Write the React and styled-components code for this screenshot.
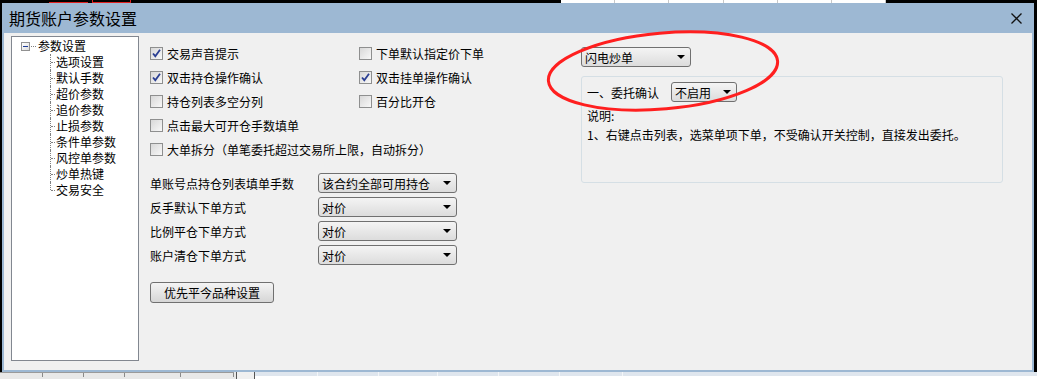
import React from "react";
import styled, { createGlobalStyle } from "styled-components";

const GlobalStyle = createGlobalStyle`
  body {
    margin: 0;
    background: #000;
    font-family: "Noto Sans CJK SC", "Noto Sans", sans-serif;
  }
`;

const checks = [
  { label: "交易声音提示", checked: true },
  { label: "下单默认指定价下单", checked: false },
  { label: "双击持仓操作确认", checked: true },
  { label: "双击挂单操作确认", checked: true },
  { label: "持仓列表多空分列", checked: false },
  { label: "百分比开仓", checked: false },
  { label: "点击最大可开仓手数填单", checked: false, wide: true },
  { label: "大单拆分（单笔委托超过交易所上限，自动拆分）", checked: false, wide: true },
];

const selects = [
  { label: "单账号点持仓列表填单手数", value: "该合约全部可用持仓" },
  { label: "反手默认下单方式", value: "对价" },
  { label: "比例平仓下单方式", value: "对价" },
  { label: "账户清仓下单方式", value: "对价" },
];

const treeItems = ["选项设置", "默认手数", "超价参数", "追价参数", "止损参数", "条件单参数", "风控单参数", "炒单热键", "交易安全"];

const Check = ({ checked }) => (
  <Box>
    {checked && (
      <svg width="11" height="11" viewBox="0 0 11 11">
        <path d="M2 5.5 L4.3 8.2 L9 1.8" fill="none" stroke="#2b3f93" strokeWidth="1.8" />
      </svg>
    )}
  </Box>
);

const App = () => {
  return (
    <Screen>
      <GlobalStyle />
      <TopStrip>
        <RedMark $w={39} />
        <RedBox />
        <Spacer $w={430} />
        <TableStrip>
          {[0, 1, 2, 3, 4, 5].map((i) => (
            <TableCell key={i} />
          ))}
        </TableStrip>
      </TopStrip>
      <Dialog>
        <TitleBar>
          <Title>期货账户参数设置</Title>
          <Close>
            <svg width="11" height="11" viewBox="0 0 11 11">
              <path d="M0.5 0.5 L10.5 10.5 M10.5 0.5 L0.5 10.5" stroke="#111" strokeWidth="1.3" />
            </svg>
          </Close>
        </TitleBar>
        <Body>
          <TreeBox>
            <TreeRoot>
              <Expander />
              <RootDots />
              参数设置
            </TreeRoot>
            <TreeChildren>
              {treeItems.map((t, i) => (
                <TreeItem key={t} $last={i === treeItems.length - 1}>
                  {t}
                </TreeItem>
              ))}
            </TreeChildren>
          </TreeBox>
          <Middle>
            <CheckGrid>
              {checks.map((c) => (
                <CheckRow key={c.label} $wide={c.wide}>
                  <Check checked={c.checked} />
                  {c.label}
                </CheckRow>
              ))}
            </CheckGrid>
            <SelectGrid>
              {selects.map((s) => (
                <React.Fragment key={s.label}>
                  <Label>{s.label}</Label>
                  <Select $w={139}>
                    <span>{s.value}</span>
                    <Arrow />
                  </Select>
                </React.Fragment>
              ))}
            </SelectGrid>
            <Button>优先平今品种设置</Button>
          </Middle>
          <Right>
            <Select $w={110}>
              <span>闪电炒单</span>
              <Arrow />
            </Select>
            <Group>
              <GroupRow>
                <span>一、委托确认</span>
                <Select $w={66}>
                  <span>不启用</span>
                  <Arrow />
                </Select>
              </GroupRow>
              <Note>说明:</Note>
              <Note>1、右键点击列表，选菜单项下单，不受确认开关控制，直接发出委托。</Note>
            </Group>
          </Right>
        </Body>
      </Dialog>
      <BottomStrip>
        <GridCells>
          {[40, 40, 40, 55, 52].map((w, i) => (
            <GridCell key={i} $w={w} />
          ))}
        </GridCells>
        <Gap />
        <BlueCells>
          {[62, 60, 58, 60, 60, 62].map((w, i) => (
            <BlueCell key={i} $w={w} />
          ))}
        </BlueCells>
      </BottomStrip>
      <Ellipse width="240" height="90" viewBox="0 0 240 90">
        <ellipse
          cx="120"
          cy="45"
          rx="115"
          ry="38"
          fill="none"
          stroke="#ff1f1f"
          strokeWidth="3"
          transform="rotate(-5 120 45)"
        />
      </Ellipse>
    </Screen>
  );
};

export default App;

const Screen = styled.div`
  position: relative;
  width: 1037px;
  height: 379px;
  overflow: hidden;
  background: #000;
  font-size: 12px;
  color: #000;
`;

const TopStrip = styled.div`
  display: flex;
  height: 3px;
  padding-left: 49px;
`;

const RedMark = styled.div`
  width: ${(p) => p.$w}px;
  height: 3px;
  border-bottom: 1px solid #e02020;
  box-sizing: border-box;
`;

const RedBox = styled.div`
  width: 39px;
  height: 3px;
  margin-left: 4px;
  border: 1px solid #e02020;
  border-top: none;
  box-sizing: border-box;
`;

const Spacer = styled.div`
  width: ${(p) => p.$w}px;
`;

const TableStrip = styled.div`
  display: flex;
  width: 325px;
  background: #fff;
`;

const TableCell = styled.div`
  flex: 1;
  border-right: 1px solid #c8c8c8;
`;

const Dialog = styled.div`
  width: 1032px;
  height: 369px;
  margin-left: 2px;
  box-sizing: border-box;
  border: 2px solid #9db8d3;
  border-top: none;
  background: #f0f0f0;
  display: flex;
  flex-direction: column;
`;

const TitleBar = styled.div`
  height: 30px;
  margin: 0 -2px;
  background: #9db8d3;
  display: flex;
  align-items: center;
  justify-content: space-between;
  padding: 0 12px 0 7px;
`;

const Title = styled.div`
  font-size: 16px;
  line-height: 20px;
  color: #000;
`;

const Close = styled.div`
  display: flex;
  align-items: center;
`;

const Body = styled.div`
  flex: 1;
  display: flex;
  align-items: flex-start;
`;

const TreeBox = styled.div`
  width: 128px;
  height: 325px;
  margin: 3px 0 0 7px;
  box-sizing: border-box;
  border: 1px solid #828790;
  background: #fff;
  padding: 1px 0 0 9px;
`;

const TreeRoot = styled.div`
  display: flex;
  align-items: center;
  height: 16px;
  line-height: 16px;
`;

const Expander = styled.div`
  position: relative;
  width: 9px;
  height: 9px;
  box-sizing: border-box;
  border: 1px solid #919191;
  background: linear-gradient(135deg, #ffffff, #dcdcdc);
  &::after {
    content: "";
    position: absolute;
    left: 1px;
    right: 1px;
    top: 3px;
    height: 1px;
    background: #1e3c96;
  }
`;

const RootDots = styled.div`
  width: 5px;
  margin: 0 2px 0 1px;
  border-top: 1px dotted #808080;
`;

const TreeChildren = styled.div`
  margin-left: 29px;
`;

const TreeItem = styled.div`
  position: relative;
  height: 16px;
  line-height: 16px;
  padding-left: 6px;
  &::before {
    content: "";
    position: absolute;
    left: 0;
    top: 0;
    height: ${(p) => (p.$last ? "8px" : "16px")};
    border-left: 1px dotted #808080;
  }
  &::after {
    content: "";
    position: absolute;
    left: 1px;
    top: 8px;
    width: 4px;
    border-top: 1px dotted #808080;
  }
`;

const Middle = styled.div`
  width: 442px;
  padding: 8px 0 0 11px;
  box-sizing: border-box;
  display: flex;
  flex-direction: column;
  align-items: flex-start;
`;

const CheckGrid = styled.div`
  display: grid;
  grid-template-columns: 209px auto;
  grid-auto-rows: 24px;
`;

const CheckRow = styled.label`
  grid-column: ${(p) => (p.$wide ? "1 / 3" : "auto")};
  display: flex;
  align-items: center;
  gap: 4px;
  white-space: nowrap;
`;

const Box = styled.span`
  width: 13px;
  height: 13px;
  box-sizing: border-box;
  border: 1px solid #8e8f8f;
  background: linear-gradient(135deg, #d8d8d8, #f8f8f8);
  display: flex;
  align-items: center;
  justify-content: center;
`;

const SelectGrid = styled.div`
  display: grid;
  grid-template-columns: 168px 139px;
  grid-auto-rows: 24px;
  align-items: center;
  margin-top: 10px;
`;

const Label = styled.div`
  white-space: nowrap;
`;

const Select = styled.div`
  width: ${(p) => p.$w}px;
  height: 20px;
  box-sizing: border-box;
  border: 1px solid #707070;
  border-radius: 3px;
  background: linear-gradient(#f4f4f4, #dcdcdc);
  display: flex;
  align-items: center;
  justify-content: space-between;
  padding: 0 5px 0 3px;
  white-space: nowrap;
`;

const Arrow = styled.span`
  width: 0;
  height: 0;
  border-left: 4px solid transparent;
  border-right: 4px solid transparent;
  border-top: 4px solid #000;
`;

const Button = styled.div`
  width: 124px;
  height: 21px;
  margin-top: 15px;
  box-sizing: border-box;
  border: 1px solid #707070;
  border-radius: 3px;
  background: linear-gradient(#f4f4f4, #d6d6d6);
  display: flex;
  align-items: center;
  justify-content: center;
`;

const Right = styled.div`
  padding: 14px 0 0 0;
  display: flex;
  flex-direction: column;
  gap: 9px;
`;

const Group = styled.div`
  width: 422px;
  height: 107px;
  box-sizing: border-box;
  border: 1px solid #d5dfe5;
  border-radius: 3px;
  padding: 5px 0 0 5px;
`;

const GroupRow = styled.div`
  display: flex;
  align-items: center;
  gap: 12px;
  height: 20px;
`;

const Note = styled.div`
  height: 19px;
  line-height: 19px;
  &:nth-of-type(2) {
    margin-top: 4px;
  }
`;

const BottomStrip = styled.div`
  display: flex;
  height: 7px;
  background: #e8e8e8;
`;

const GridCells = styled.div`
  display: flex;
  padding-left: 2px;
  border-top: 1px solid #9a9a9a;
`;

const GridCell = styled.div`
  width: ${(p) => p.$w}px;
  border-right: 1px solid #8a8a8a;
  height: 4px;
`;

const Gap = styled.div`
  width: 17px;
  margin-left: 2px;
  border-left: 1px solid #555;
  border-right: 1px solid #555;
  background: #f0f0f0;
`;

const BlueCells = styled.div`
  flex: 1;
  display: flex;
  background: #dfe6ee;
  border-bottom: 3px solid #fff;
`;

const BlueCell = styled.div`
  width: ${(p) => p.$w}px;
  border-right: 1px solid #f4f6f8;
`;

const Ellipse = styled.svg`
  position: absolute;
  left: 543px;
  top: 26px;
  pointer-events: none;
`;
